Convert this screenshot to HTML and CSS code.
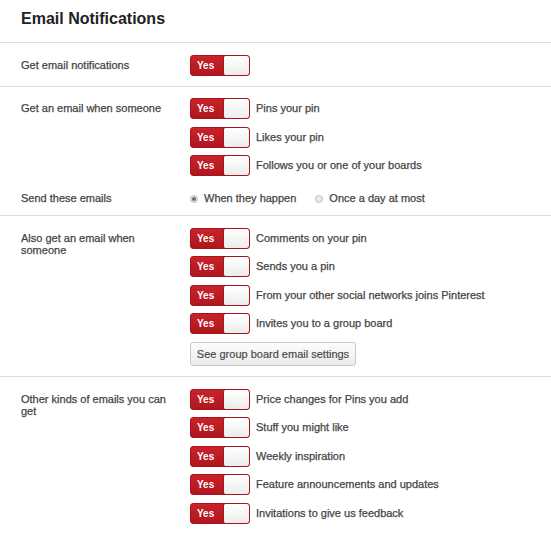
FILE: index.html
```html
<!DOCTYPE html>
<html>
<head>
<meta charset="utf-8">
<title>Email Notifications</title>
<link rel="stylesheet" href="styles.css">
</head>
<body>
<h1 class="title">Email Notifications</h1>

<section class="group">
  <div class="label">Get email notifications</div>
  <div class="options">
    <div class="option"><span class="toggle"><span class="yes">Yes</span><span class="knob"></span></span></div>
  </div>
</section>

<section class="group">
  <div class="label">Get an email when someone</div>
  <div class="options">
    <div class="option"><span class="toggle"><span class="yes">Yes</span><span class="knob"></span></span><span class="text">Pins your pin</span></div>
    <div class="option"><span class="toggle"><span class="yes">Yes</span><span class="knob"></span></span><span class="text">Likes your pin</span></div>
    <div class="option"><span class="toggle"><span class="yes">Yes</span><span class="knob"></span></span><span class="text">Follows you or one of your boards</span></div>
  </div>
  <div class="label label-radio">Send these emails</div>
  <div class="radios">
    <label class="radio"><span class="dot checked"></span>When they happen</label>
    <label class="radio"><span class="dot"></span>Once a day at most</label>
  </div>
</section>

<section class="group">
  <div class="label">Also get an email when someone</div>
  <div class="options">
    <div class="option"><span class="toggle"><span class="yes">Yes</span><span class="knob"></span></span><span class="text">Comments on your pin</span></div>
    <div class="option"><span class="toggle"><span class="yes">Yes</span><span class="knob"></span></span><span class="text">Sends you a pin</span></div>
    <div class="option"><span class="toggle"><span class="yes">Yes</span><span class="knob"></span></span><span class="text">From your other social networks joins Pinterest</span></div>
    <div class="option"><span class="toggle"><span class="yes">Yes</span><span class="knob"></span></span><span class="text">Invites you to a group board</span></div>
    <div class="btn-row"><button class="btn">See group board email settings</button></div>
  </div>
</section>

<section class="group last">
  <div class="label">Other kinds of emails you can get</div>
  <div class="options">
    <div class="option"><span class="toggle"><span class="yes">Yes</span><span class="knob"></span></span><span class="text">Price changes for Pins you add</span></div>
    <div class="option"><span class="toggle"><span class="yes">Yes</span><span class="knob"></span></span><span class="text">Stuff you might like</span></div>
    <div class="option"><span class="toggle"><span class="yes">Yes</span><span class="knob"></span></span><span class="text">Weekly inspiration</span></div>
    <div class="option"><span class="toggle"><span class="yes">Yes</span><span class="knob"></span></span><span class="text">Feature announcements and updates</span></div>
    <div class="option"><span class="toggle"><span class="yes">Yes</span><span class="knob"></span></span><span class="text">Invitations to give us feedback</span></div>
  </div>
</section>
</body>
</html>
```

FILE: styles.css
```css
* { box-sizing: border-box; }

html, body {
  margin: 0;
  padding: 0;
  background: #fff;
}

body {
  font-family: "Liberation Sans", Arial, sans-serif;
  font-size: 11px;
  color: #4a4a4a;
  width: 551px;
  overflow: hidden;
}

.title {
  margin: 0;
  padding: 10px 0 14px 21px;
  font-size: 16px;
  line-height: 18px;
  font-weight: bold;
  color: #222;
}

.group {
  display: grid;
  grid-template-columns: 169px 1fr;
  border-top: 1px solid #dcdcdc;
  padding: 11.5px 0 10px 21px;
}

.label {
  padding: 4px 12px 0 0;
  line-height: 12px;
  color: #444;
  -webkit-text-stroke: 0.25px #444;
}

.label-radio {
  margin-top: 16px;
  padding-top: 0;
  line-height: 13px;
}

.options {
  display: flex;
  flex-direction: column;
  gap: 7.5px;
}

.option {
  display: flex;
  align-items: center;
  gap: 6px;
  height: 21px;
}

.text {
  color: #444;
  line-height: 13px;
  -webkit-text-stroke: 0.25px #444;
}

.toggle {
  display: flex;
  width: 60px;
  height: 21px;
  border: 1px solid #a8141c;
  border-radius: 3px;
  background: linear-gradient(#c9232b, #b0161d);
  overflow: hidden;
}

.yes {
  width: 32px;
  padding-left: 6px;
  color: #fff;
  font-weight: bold;
  font-size: 10px;
  line-height: 19px;
}

.knob {
  flex: 1;
  margin: 0;
  background: linear-gradient(#ffffff, #ececec);
  border-radius: 2px;
  border-left: 1px solid #9e1a1f;
}

.radios {
  margin-top: 16px;
  display: flex;
  align-items: center;
  gap: 19px;
  height: 13px;
}

.radio {
  display: flex;
  align-items: center;
  gap: 6px;
  color: #444;
  line-height: 13px;
  -webkit-text-stroke: 0.25px #444;
}

.dot {
  width: 8px;
  height: 8px;
  border-radius: 50%;
  border: 1px solid #bdbdbd;
  background: radial-gradient(circle, #f4f4f4 0%, #dedede 100%);
  display: flex;
  align-items: center;
  justify-content: center;
}

.dot.checked::after {
  content: "";
  width: 4px;
  height: 4px;
  border-radius: 50%;
  background: #6b6b6b;
}

.btn-row {
  padding-top: 0.5px;
}

.btn {
  font-family: "Liberation Sans", Arial, sans-serif;
  font-size: 11px;
  color: #444;
  height: 24px;
  width: 166px;
  padding: 0;
  border: 1px solid #c8c8c8;
  border-radius: 3px;
  background: linear-gradient(#fdfdfd, #ebebeb);
  -webkit-text-stroke: 0.15px #444;
}
```
